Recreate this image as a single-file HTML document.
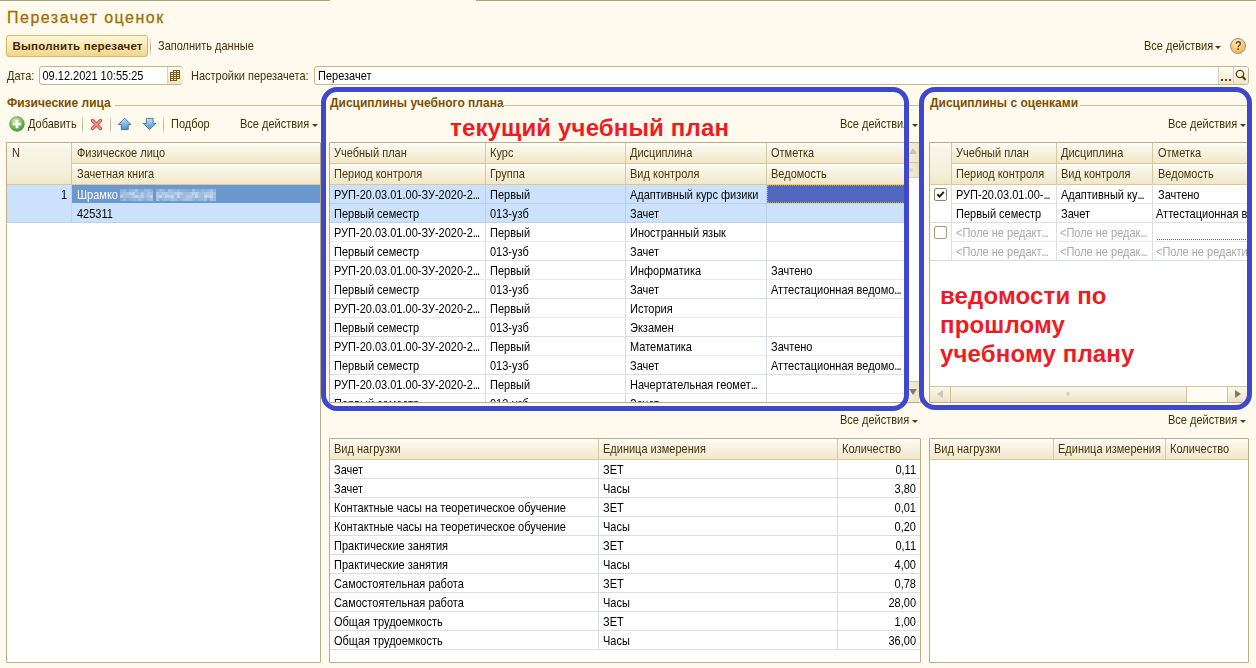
<!DOCTYPE html>
<html><head><meta charset="utf-8"><title>Перезачет оценок</title>
<style>
html,body{margin:0;padding:0;}
body{width:1256px;height:668px;overflow:hidden;position:relative;background:#FEFAEE;font-family:"Liberation Sans",sans-serif;}
div{position:absolute;}
.t{white-space:pre;}
</style></head><body>
<div style="left:0px;top:0px;width:330px;height:1px;background:#AAA478"></div>
<div style="left:476px;top:0px;width:780px;height:1px;background:#AAA478"></div>
<div style="left:0px;top:1px;width:330px;height:1px;background:#FFFFF6"></div>
<div style="left:476px;top:1px;width:780px;height:1px;background:#FFFFF6"></div>
<div class="t" style="left:7px;top:8.46px;font-size:16px;line-height:20px;color:#A06F00;letter-spacing:1.5px;-webkit-text-stroke:0.3px #A06F00;">Перезачет оценок</div>
<div style="left:6px;top:35px;width:140px;height:20px;border:1px solid #D9B867;border-radius:3px;background:linear-gradient(#FFF5D9,#F8E4AA 60%,#F0D48C);"></div>
<div class="t" style="left:12.5px;top:39.27px;font-size:11.5px;line-height:15.5px;color:#3E2A00;font-weight:bold;letter-spacing:0.22px;">Выполнить перезачет</div>
<div style="left:150px;top:37px;width:1px;height:20px;background:linear-gradient(rgba(190,180,140,0),#BDB38C 40%,#BDB38C 60%,rgba(190,180,140,0))"></div>
<div class="t" style="left:158px;top:38.69px;font-size:11px;line-height:15px;color:#403008;transform:scaleY(1.12);transform-origin:0 11.31px;">Заполнить данные</div>
<div class="t" style="left:1144px;top:38.69px;font-size:11px;line-height:15px;color:#403008;transform:scaleY(1.12);transform-origin:0 11.31px;">Все действия</div>
<div style="left:1215px;top:46px;width:0;height:0;border-left:3px solid transparent;border-right:3px solid transparent;border-top:3px solid #4D3B0D;"></div>
<div style="left:1230px;top:38px;width:14px;height:14px;border-radius:50%;border:1px solid #9A9488;background:radial-gradient(circle at 45% 30%,#FFF0D0 0,#FBCB80 45%,#F2A436 100%);"></div>
<div class="t" style="left:1235px;top:38.69px;font-size:11px;line-height:15px;color:#6E4420;font-weight:bold;transform:scaleY(1.12);transform-origin:0 11.31px;">?</div>
<div class="t" style="left:7px;top:68.69px;font-size:11px;line-height:15px;color:#403008;transform:scaleY(1.12);transform-origin:0 11.31px;">Дата:</div>
<div style="left:39px;top:66px;width:142px;height:17px;border:1px solid #C2B88E;border-radius:3px;background:#fff;"></div>
<div class="t" style="left:42.5px;top:68.69px;font-size:11px;line-height:15px;color:#000;transform:scaleY(1.12);transform-origin:0 11.31px;">09.12.2021 10:55:25</div>
<div style="left:167px;top:67px;width:15px;height:17px;border-left:1px solid #D8D0B0;border-radius:0 2px 2px 0;background:linear-gradient(#FFFDF6,#F7F1DE 60%,#EDE5C8);"></div>
<svg style="position:absolute;left:170px;top:70px" width="10" height="11" viewBox="0 0 10 11" shape-rendering="crispEdges"><rect x="3" y="0" width="7" height="9" fill="#7A5A0E"/><rect x="0" y="2" width="7" height="9" fill="#7A5A0E"/><rect x="4" y="1" width="2" height="1" fill="#F6EFD8"/><rect x="7" y="1" width="2" height="1" fill="#F6EFD8"/><rect x="1" y="3" width="2" height="1" fill="#F6EFD8"/><rect x="4" y="3" width="2" height="1" fill="#F6EFD8"/><rect x="7" y="3" width="2" height="1" fill="#F6EFD8"/><rect x="1" y="5" width="2" height="1" fill="#F6EFD8"/><rect x="4" y="5" width="2" height="1" fill="#F6EFD8"/><rect x="7" y="5" width="2" height="1" fill="#F6EFD8"/><rect x="1" y="7" width="2" height="1" fill="#F6EFD8"/><rect x="4" y="7" width="2" height="1" fill="#F6EFD8"/><rect x="7" y="7" width="2" height="1" fill="#F6EFD8"/><rect x="1" y="9" width="2" height="1" fill="#F6EFD8"/><rect x="4" y="9" width="2" height="1" fill="#F6EFD8"/></svg>
<div class="t" style="left:191px;top:68.69px;font-size:11px;line-height:15px;color:#403008;transform:scaleY(1.12);transform-origin:0 11.31px;">Настройки перезачета:</div>
<div style="left:314px;top:66px;width:933px;height:17px;border:1px solid #C2B88E;border-radius:3px;background:#fff;"></div>
<div class="t" style="left:318px;top:68.69px;font-size:11px;line-height:15px;color:#000;transform:scaleY(1.12);transform-origin:0 11.31px;">Перезачет</div>
<div style="left:1218px;top:67px;width:14px;height:17px;border-left:1px solid #D8D0B0;background:linear-gradient(#FFFDF6,#F7F1DE 60%,#EDE5C8);"></div>
<div style="left:1233px;top:67px;width:14px;height:17px;border-left:1px solid #D8D0B0;border-radius:0 2px 2px 0;background:linear-gradient(#FFFDF6,#F7F1DE 60%,#EDE5C8);"></div>
<svg style="position:absolute;left:1221px;top:79px" width="12" height="2" shape-rendering="crispEdges"><rect x="0" y="0" width="2" height="2" fill="#5A4208"/><rect x="4" y="0" width="2" height="2" fill="#5A4208"/><rect x="8" y="0" width="2" height="2" fill="#5A4208"/></svg>
<svg style="position:absolute;left:1234px;top:68px" width="13" height="14" viewBox="0 0 13 14"><circle cx="6" cy="6" r="3.7" fill="none" stroke="#5A4208" stroke-width="1.3"/><path d="M8.6 8.8 L11 11.3" stroke="#5A4208" stroke-width="2.2" stroke-linecap="round"/></svg>
<div class="t" style="left:7px;top:94.84px;font-size:12px;line-height:16px;color:#7E5000;font-weight:bold;">Физические лица</div>
<div style="left:115px;top:105px;width:206px;height:1px;background:#C9BF94"></div>
<div class="t" style="left:330px;top:94.84px;font-size:12px;line-height:16px;color:#7E5000;font-weight:bold;">Дисциплины учебного плана</div>
<div style="left:502px;top:105px;width:418px;height:1px;background:#C9BF94"></div>
<div class="t" style="left:930px;top:94.84px;font-size:12px;line-height:16px;color:#7E5000;font-weight:bold;">Дисциплины с оценками</div>
<div style="left:1080px;top:105px;width:169px;height:1px;background:#C9BF94"></div>
<svg style="position:absolute;left:9px;top:116px" width="16" height="16" viewBox="0 0 16 16"><defs><radialGradient id="g1" cx="0.4" cy="0.3" r="0.8"><stop offset="0" stop-color="#CFEFB8"/><stop offset="0.6" stop-color="#6DBA4A"/><stop offset="1" stop-color="#3E8A2A"/></radialGradient></defs><circle cx="8" cy="8" r="7.3" fill="url(#g1)" stroke="#6A8A6A" stroke-width="0.8"/><path d="M8 3.8V12.2M3.8 8H12.2" stroke="#fff" stroke-width="2.6"/></svg>
<div class="t" style="left:28px;top:116.69px;font-size:11px;line-height:15px;color:#403008;transform:scaleY(1.12);transform-origin:0 11.31px;">Добавить</div>
<div style="left:82px;top:115px;width:1px;height:20px;background:linear-gradient(rgba(190,180,140,0),#BDB38C 40%,#BDB38C 60%,rgba(190,180,140,0))"></div>
<svg style="position:absolute;left:89px;top:117px" width="15" height="15" viewBox="89 117 15 15"><path d="M92.5 120.5L100.5 128.5M100.5 120.5L92.5 128.5" stroke="#D84A44" stroke-width="3.4" stroke-linecap="round"/><path d="M92.5 120.5L100.5 128.5M100.5 120.5L92.5 128.5" stroke="#F6A898" stroke-width="1.2" stroke-linecap="round"/></svg>
<div style="left:110px;top:115px;width:1px;height:20px;background:linear-gradient(rgba(190,180,140,0),#BDB38C 40%,#BDB38C 60%,rgba(190,180,140,0))"></div>
<svg style="position:absolute;left:116px;top:116px" width="18" height="16" viewBox="116 116 18 16"><defs><linearGradient id="ga" x1="0" y1="0" x2="0" y2="1"><stop offset="0" stop-color="#C4E4FA"/><stop offset="1" stop-color="#4A90D0"/></linearGradient></defs><path d="M124.6 118.2L131 124.6H128.2V129.6H121.3V124.6H118.3Z" fill="url(#ga)" stroke="#3E6E98" stroke-width="0.9" stroke-linejoin="round"/></svg>
<svg style="position:absolute;left:141px;top:116px" width="18" height="16" viewBox="141 116 18 16"><defs><linearGradient id="gb" x1="0" y1="0" x2="0" y2="1"><stop offset="0" stop-color="#C4E4FA"/><stop offset="1" stop-color="#4A90D0"/></linearGradient></defs><path d="M149.5 129.6L155.9 123.4H153.1V118.4H146.3V123.4H143.2Z" fill="url(#gb)" stroke="#3E6E98" stroke-width="0.9" stroke-linejoin="round"/></svg>
<div style="left:163px;top:115px;width:1px;height:20px;background:linear-gradient(rgba(190,180,140,0),#BDB38C 40%,#BDB38C 60%,rgba(190,180,140,0))"></div>
<div class="t" style="left:171px;top:116.69px;font-size:11px;line-height:15px;color:#403008;transform:scaleY(1.12);transform-origin:0 11.31px;">Подбор</div>
<div class="t" style="left:240px;top:116.69px;font-size:11px;line-height:15px;color:#403008;transform:scaleY(1.12);transform-origin:0 11.31px;">Все действия</div>
<div style="left:312px;top:124px;width:0;height:0;border-left:3px solid transparent;border-right:3px solid transparent;border-top:3px solid #4D3B0D;"></div>
<div class="t" style="left:840px;top:116.69px;font-size:11px;line-height:15px;color:#403008;transform:scaleY(1.12);transform-origin:0 11.31px;">Все действия</div>
<div style="left:912px;top:124px;width:0;height:0;border-left:3px solid transparent;border-right:3px solid transparent;border-top:3px solid #4D3B0D;"></div>
<div class="t" style="left:1168px;top:116.69px;font-size:11px;line-height:15px;color:#403008;transform:scaleY(1.12);transform-origin:0 11.31px;">Все действия</div>
<div style="left:1240px;top:124px;width:0;height:0;border-left:3px solid transparent;border-right:3px solid transparent;border-top:3px solid #4D3B0D;"></div>
<div class="t" style="left:840px;top:412.69px;font-size:11px;line-height:15px;color:#403008;transform:scaleY(1.12);transform-origin:0 11.31px;">Все действия</div>
<div style="left:912px;top:420px;width:0;height:0;border-left:3px solid transparent;border-right:3px solid transparent;border-top:3px solid #4D3B0D;"></div>
<div class="t" style="left:1168px;top:412.69px;font-size:11px;line-height:15px;color:#403008;transform:scaleY(1.12);transform-origin:0 11.31px;">Все действия</div>
<div style="left:1240px;top:420px;width:0;height:0;border-left:3px solid transparent;border-right:3px solid transparent;border-top:3px solid #4D3B0D;"></div>
<div style="left:6px;top:142px;width:315px;height:521px;box-sizing:border-box;border:1px solid #B5AE88;border-radius:1px;background:#fff;"></div>
<div style="left:7px;top:143px;width:313px;height:41px;background:linear-gradient(#FFFDF8 0px,#F8F5E8 5px,#F5F0DC 30px,#F3E6C4 41px);"></div>
<div style="left:71px;top:143px;width:1px;height:41px;background:#D3C9A2"></div>
<div style="left:72px;top:163px;width:248px;height:1px;background:#D3C9A2"></div>
<div style="left:72px;top:164px;width:248px;height:20px;background:linear-gradient(#FFFDF8 0px,#F8F5E8 5px,#F5F0DC 12px,#F3E6C4 20px);"></div>
<div style="left:72px;top:143px;width:248px;height:20px;background:linear-gradient(#FFFDF8 0px,#F8F5E8 5px,#F5F0DC 12px,#F3E6C4 20px);"></div>
<div style="left:7px;top:184px;width:313px;height:1px;background:#D3C9A2"></div>
<div class="t" style="left:12px;top:145.69px;font-size:11px;line-height:15px;color:#45350C;transform:scaleY(1.12);transform-origin:0 11.31px;">N</div>
<div class="t" style="left:77px;top:145.69px;font-size:11px;line-height:15px;color:#45350C;transform:scaleY(1.12);transform-origin:0 11.31px;">Физическое лицо</div>
<div class="t" style="left:77px;top:166.69px;font-size:11px;line-height:15px;color:#45350C;transform:scaleY(1.12);transform-origin:0 11.31px;">Зачетная книга</div>
<div style="left:7px;top:185px;width:313px;height:37px;background:#CCE1FC;"></div>
<div style="left:72px;top:185px;width:248px;height:18px;background:#6A98CF;"></div>
<div style="left:71px;top:185px;width:1px;height:37px;background:#C2D2E6"></div>
<div style="left:7px;top:222px;width:313px;height:1px;background:#BCD0E8"></div>
<div class="t" style="left:27px;width:40px;text-align:right;top:187.69px;font-size:11px;line-height:15px;color:#000;transform:scaleY(1.12);transform-origin:0 11.31px;">1</div>
<div class="t" style="left:77px;top:187.69px;font-size:11px;line-height:15px;color:#fff;transform:scaleY(1.12);transform-origin:0 11.31px;">Шрамко</div>
<svg style="position:absolute;left:120px;top:189px;filter:blur(0.5px)" width="96" height="12" shape-rendering="crispEdges"><rect x="0" y="0" width="3" height="3" fill="rgb(140, 175, 218)"/><rect x="0" y="3" width="3" height="3" fill="rgb(156, 186, 223)"/><rect x="0" y="6" width="3" height="3" fill="rgb(183, 205, 232)"/><rect x="0" y="9" width="3" height="3" fill="rgb(135, 172, 216)"/><rect x="3" y="0" width="3" height="3" fill="rgb(149, 181, 221)"/><rect x="3" y="3" width="3" height="3" fill="rgb(165, 193, 226)"/><rect x="3" y="6" width="3" height="3" fill="rgb(158, 188, 224)"/><rect x="3" y="9" width="3" height="3" fill="rgb(153, 185, 222)"/><rect x="6" y="0" width="3" height="3" fill="rgb(127, 167, 214)"/><rect x="6" y="3" width="3" height="3" fill="rgb(168, 195, 227)"/><rect x="6" y="6" width="3" height="3" fill="rgb(158, 188, 224)"/><rect x="6" y="9" width="3" height="3" fill="rgb(136, 172, 216)"/><rect x="9" y="0" width="3" height="3" fill="rgb(144, 178, 219)"/><rect x="9" y="3" width="3" height="3" fill="rgb(185, 206, 233)"/><rect x="9" y="6" width="3" height="3" fill="rgb(161, 190, 225)"/><rect x="9" y="9" width="3" height="3" fill="rgb(141, 176, 218)"/><rect x="12" y="0" width="3" height="3" fill="rgb(153, 184, 222)"/><rect x="12" y="3" width="3" height="3" fill="rgb(190, 210, 234)"/><rect x="12" y="6" width="3" height="3" fill="rgb(180, 203, 231)"/><rect x="12" y="9" width="3" height="3" fill="rgb(149, 181, 221)"/><rect x="15" y="0" width="3" height="3" fill="rgb(168, 194, 227)"/><rect x="15" y="3" width="3" height="3" fill="rgb(152, 183, 222)"/><rect x="15" y="6" width="3" height="3" fill="rgb(192, 211, 235)"/><rect x="15" y="9" width="3" height="3" fill="rgb(144, 178, 219)"/><rect x="18" y="0" width="3" height="3" fill="rgb(132, 170, 215)"/><rect x="18" y="3" width="3" height="3" fill="rgb(155, 185, 223)"/><rect x="18" y="6" width="3" height="3" fill="rgb(169, 195, 227)"/><rect x="18" y="9" width="3" height="3" fill="rgb(167, 194, 227)"/><rect x="21" y="0" width="3" height="3" fill="rgb(133, 171, 216)"/><rect x="21" y="3" width="3" height="3" fill="rgb(174, 199, 229)"/><rect x="21" y="6" width="3" height="3" fill="rgb(183, 205, 232)"/><rect x="21" y="9" width="3" height="3" fill="rgb(148, 181, 220)"/><rect x="24" y="0" width="3" height="3" fill="rgb(149, 182, 221)"/><rect x="24" y="3" width="3" height="3" fill="rgb(152, 184, 222)"/><rect x="24" y="6" width="3" height="3" fill="rgb(158, 188, 224)"/><rect x="24" y="9" width="3" height="3" fill="rgb(141, 176, 218)"/><rect x="27" y="0" width="3" height="3" fill="rgb(155, 186, 223)"/><rect x="27" y="3" width="3" height="3" fill="rgb(168, 194, 227)"/><rect x="27" y="6" width="3" height="3" fill="rgb(169, 195, 227)"/><rect x="27" y="9" width="3" height="3" fill="rgb(157, 187, 223)"/><rect x="30" y="0" width="3" height="3" fill="rgb(145, 179, 219)"/><rect x="30" y="3" width="3" height="3" fill="rgb(162, 191, 225)"/><rect x="30" y="6" width="3" height="3" fill="rgb(190, 209, 234)"/><rect x="30" y="9" width="3" height="3" fill="rgb(162, 190, 225)"/><rect x="36" y="0" width="3" height="3" fill="rgb(136, 173, 217)"/><rect x="36" y="3" width="3" height="3" fill="rgb(174, 199, 229)"/><rect x="36" y="6" width="3" height="3" fill="rgb(178, 201, 230)"/><rect x="36" y="9" width="3" height="3" fill="rgb(169, 195, 227)"/><rect x="39" y="0" width="3" height="3" fill="rgb(157, 187, 223)"/><rect x="39" y="3" width="3" height="3" fill="rgb(162, 190, 225)"/><rect x="39" y="6" width="3" height="3" fill="rgb(197, 215, 237)"/><rect x="39" y="9" width="3" height="3" fill="rgb(137, 173, 217)"/><rect x="42" y="0" width="3" height="3" fill="rgb(144, 178, 219)"/><rect x="42" y="3" width="3" height="3" fill="rgb(182, 204, 232)"/><rect x="42" y="6" width="3" height="3" fill="rgb(162, 190, 225)"/><rect x="42" y="9" width="3" height="3" fill="rgb(153, 184, 222)"/><rect x="45" y="0" width="3" height="3" fill="rgb(127, 167, 214)"/><rect x="45" y="3" width="3" height="3" fill="rgb(178, 202, 230)"/><rect x="45" y="6" width="3" height="3" fill="rgb(188, 209, 234)"/><rect x="45" y="9" width="3" height="3" fill="rgb(156, 186, 223)"/><rect x="48" y="0" width="3" height="3" fill="rgb(163, 191, 225)"/><rect x="48" y="3" width="3" height="3" fill="rgb(163, 191, 225)"/><rect x="48" y="6" width="3" height="3" fill="rgb(185, 206, 233)"/><rect x="48" y="9" width="3" height="3" fill="rgb(157, 187, 223)"/><rect x="51" y="0" width="3" height="3" fill="rgb(151, 183, 221)"/><rect x="51" y="3" width="3" height="3" fill="rgb(169, 195, 227)"/><rect x="51" y="6" width="3" height="3" fill="rgb(191, 211, 235)"/><rect x="51" y="9" width="3" height="3" fill="rgb(172, 197, 228)"/><rect x="54" y="0" width="3" height="3" fill="rgb(146, 179, 220)"/><rect x="54" y="3" width="3" height="3" fill="rgb(178, 201, 230)"/><rect x="54" y="6" width="3" height="3" fill="rgb(158, 188, 224)"/><rect x="54" y="9" width="3" height="3" fill="rgb(162, 190, 225)"/><rect x="57" y="0" width="3" height="3" fill="rgb(153, 185, 222)"/><rect x="57" y="3" width="3" height="3" fill="rgb(192, 211, 235)"/><rect x="57" y="6" width="3" height="3" fill="rgb(191, 210, 234)"/><rect x="57" y="9" width="3" height="3" fill="rgb(144, 178, 219)"/><rect x="60" y="0" width="3" height="3" fill="rgb(142, 177, 219)"/><rect x="60" y="3" width="3" height="3" fill="rgb(178, 202, 230)"/><rect x="60" y="6" width="3" height="3" fill="rgb(156, 187, 223)"/><rect x="60" y="9" width="3" height="3" fill="rgb(151, 183, 222)"/><rect x="63" y="0" width="3" height="3" fill="rgb(133, 170, 215)"/><rect x="63" y="3" width="3" height="3" fill="rgb(155, 185, 223)"/><rect x="63" y="6" width="3" height="3" fill="rgb(158, 188, 224)"/><rect x="63" y="9" width="3" height="3" fill="rgb(165, 192, 226)"/><rect x="66" y="0" width="3" height="3" fill="rgb(131, 169, 215)"/><rect x="66" y="3" width="3" height="3" fill="rgb(160, 189, 224)"/><rect x="66" y="6" width="3" height="3" fill="rgb(172, 197, 228)"/><rect x="66" y="9" width="3" height="3" fill="rgb(169, 195, 227)"/><rect x="69" y="0" width="3" height="3" fill="rgb(129, 168, 214)"/><rect x="69" y="3" width="3" height="3" fill="rgb(169, 195, 227)"/><rect x="69" y="6" width="3" height="3" fill="rgb(179, 202, 231)"/><rect x="69" y="9" width="3" height="3" fill="rgb(170, 196, 227)"/><rect x="72" y="0" width="3" height="3" fill="rgb(161, 190, 225)"/><rect x="72" y="3" width="3" height="3" fill="rgb(187, 207, 233)"/><rect x="72" y="6" width="3" height="3" fill="rgb(167, 194, 227)"/><rect x="72" y="9" width="3" height="3" fill="rgb(149, 182, 221)"/><rect x="75" y="0" width="3" height="3" fill="rgb(141, 176, 218)"/><rect x="75" y="3" width="3" height="3" fill="rgb(187, 208, 233)"/><rect x="75" y="6" width="3" height="3" fill="rgb(197, 214, 236)"/><rect x="75" y="9" width="3" height="3" fill="rgb(138, 174, 217)"/><rect x="78" y="0" width="3" height="3" fill="rgb(133, 171, 216)"/><rect x="78" y="3" width="3" height="3" fill="rgb(159, 189, 224)"/><rect x="78" y="6" width="3" height="3" fill="rgb(165, 193, 226)"/><rect x="78" y="9" width="3" height="3" fill="rgb(152, 184, 222)"/><rect x="81" y="0" width="3" height="3" fill="rgb(151, 183, 221)"/><rect x="81" y="3" width="3" height="3" fill="rgb(161, 190, 225)"/><rect x="81" y="6" width="3" height="3" fill="rgb(156, 186, 223)"/><rect x="81" y="9" width="3" height="3" fill="rgb(150, 182, 221)"/><rect x="84" y="0" width="3" height="3" fill="rgb(142, 176, 218)"/><rect x="84" y="3" width="3" height="3" fill="rgb(174, 199, 229)"/><rect x="84" y="6" width="3" height="3" fill="rgb(196, 214, 236)"/><rect x="84" y="9" width="3" height="3" fill="rgb(161, 190, 225)"/><rect x="87" y="0" width="3" height="3" fill="rgb(148, 181, 220)"/><rect x="87" y="3" width="3" height="3" fill="rgb(176, 200, 230)"/><rect x="87" y="6" width="3" height="3" fill="rgb(184, 206, 232)"/><rect x="87" y="9" width="3" height="3" fill="rgb(134, 171, 216)"/><rect x="90" y="0" width="3" height="3" fill="rgb(164, 192, 226)"/><rect x="90" y="3" width="3" height="3" fill="rgb(183, 205, 232)"/><rect x="90" y="6" width="3" height="3" fill="rgb(193, 212, 235)"/><rect x="90" y="9" width="3" height="3" fill="rgb(166, 193, 226)"/><rect x="93" y="0" width="3" height="3" fill="rgb(143, 177, 219)"/><rect x="93" y="3" width="3" height="3" fill="rgb(167, 194, 227)"/><rect x="93" y="6" width="3" height="3" fill="rgb(160, 189, 224)"/><rect x="93" y="9" width="3" height="3" fill="rgb(159, 188, 224)"/></svg>
<div class="t" style="left:77px;top:206.69px;font-size:11px;line-height:15px;color:#000;transform:scaleY(1.12);transform-origin:0 11.31px;">425311</div>
<div style="left:329px;top:142px;width:592px;height:261px;box-sizing:border-box;border:1px solid #B5AE88;border-radius:1px;background:#fff;"></div>
<div style="left:330px;top:143px;width:575px;height:20px;background:linear-gradient(#FFFDF8 0px,#F8F5E8 5px,#F5F0DC 12px,#F3E6C4 20px);"></div>
<div style="left:330px;top:164px;width:575px;height:20px;background:linear-gradient(#FFFDF8 0px,#F8F5E8 5px,#F5F0DC 12px,#F3E6C4 20px);"></div>
<div style="left:330px;top:163px;width:575px;height:1px;background:#D3C9A2"></div>
<div style="left:330px;top:184px;width:575px;height:1px;background:#D3C9A2"></div>
<div style="left:485px;top:143px;width:1px;height:41px;background:#D3C9A2"></div>
<div style="left:625px;top:143px;width:1px;height:41px;background:#D3C9A2"></div>
<div style="left:766px;top:143px;width:1px;height:41px;background:#D3C9A2"></div>
<div class="t" style="left:334px;top:145.69px;font-size:11px;line-height:15px;color:#45350C;transform:scaleY(1.12);transform-origin:0 11.31px;">Учебный план</div>
<div class="t" style="left:490px;top:145.69px;font-size:11px;line-height:15px;color:#45350C;transform:scaleY(1.12);transform-origin:0 11.31px;">Курс</div>
<div class="t" style="left:630px;top:145.69px;font-size:11px;line-height:15px;color:#45350C;transform:scaleY(1.12);transform-origin:0 11.31px;">Дисциплина</div>
<div class="t" style="left:771px;top:145.69px;font-size:11px;line-height:15px;color:#45350C;transform:scaleY(1.12);transform-origin:0 11.31px;">Отметка</div>
<div class="t" style="left:334px;top:166.69px;font-size:11px;line-height:15px;color:#45350C;transform:scaleY(1.12);transform-origin:0 11.31px;">Период контроля</div>
<div class="t" style="left:490px;top:166.69px;font-size:11px;line-height:15px;color:#45350C;transform:scaleY(1.12);transform-origin:0 11.31px;">Группа</div>
<div class="t" style="left:630px;top:166.69px;font-size:11px;line-height:15px;color:#45350C;transform:scaleY(1.12);transform-origin:0 11.31px;">Вид контроля</div>
<div class="t" style="left:771px;top:166.69px;font-size:11px;line-height:15px;color:#45350C;transform:scaleY(1.12);transform-origin:0 11.31px;">Ведомость</div>
<div style="left:330px;top:185px;width:575px;height:217px;overflow:hidden;">
<div style="left:0px;top:0px;width:575px;height:37px;background:#CCE1FC;"></div>
<div style="left:155px;top:0px;width:1px;height:217px;background:#D9DEE3"></div>
<div style="left:155px;top:0px;width:1px;height:37px;background:#BCD0E8"></div>
<div style="left:295px;top:0px;width:1px;height:217px;background:#D9DEE3"></div>
<div style="left:295px;top:0px;width:1px;height:37px;background:#BCD0E8"></div>
<div style="left:436px;top:0px;width:1px;height:217px;background:#D9DEE3"></div>
<div style="left:436px;top:0px;width:1px;height:37px;background:#BCD0E8"></div>
<div style="left:437px;top:0px;width:138px;height:18px;background:#5068C0;box-sizing:border-box;border:1px dotted #C0A040;"></div>
<div style="left:0px;top:18px;width:575px;height:1px;background:#BCD0E8"></div>
<div style="left:0px;top:37px;width:575px;height:1px;background:#BCD0E8"></div>
<div class="t" style="left:4px;top:2.69px;font-size:11px;line-height:15px;color:#000;transform:scaleY(1.12);transform-origin:0 11.31px;">РУП-20.03.01.00-ЗУ-2020-2<span style="letter-spacing:-1px">...</span></div>
<div class="t" style="left:160px;top:2.69px;font-size:11px;line-height:15px;color:#000;transform:scaleY(1.12);transform-origin:0 11.31px;">Первый</div>
<div class="t" style="left:300px;top:2.69px;font-size:11px;line-height:15px;color:#000;transform:scaleY(1.12);transform-origin:0 11.31px;">Адаптивный курс физики</div>
<div class="t" style="left:4px;top:21.69px;font-size:11px;line-height:15px;color:#000;transform:scaleY(1.12);transform-origin:0 11.31px;">Первый семестр</div>
<div class="t" style="left:160px;top:21.69px;font-size:11px;line-height:15px;color:#000;transform:scaleY(1.12);transform-origin:0 11.31px;">013-узб</div>
<div class="t" style="left:300px;top:21.69px;font-size:11px;line-height:15px;color:#000;transform:scaleY(1.12);transform-origin:0 11.31px;">Зачет</div>
<div style="left:0px;top:56px;width:575px;height:1px;background:#EEE9E9"></div>
<div style="left:0px;top:75px;width:575px;height:1px;background:#D9DEE3"></div>
<div class="t" style="left:4px;top:40.69px;font-size:11px;line-height:15px;color:#000;transform:scaleY(1.12);transform-origin:0 11.31px;">РУП-20.03.01.00-ЗУ-2020-2<span style="letter-spacing:-1px">...</span></div>
<div class="t" style="left:160px;top:40.69px;font-size:11px;line-height:15px;color:#000;transform:scaleY(1.12);transform-origin:0 11.31px;">Первый</div>
<div class="t" style="left:300px;top:40.69px;font-size:11px;line-height:15px;color:#000;transform:scaleY(1.12);transform-origin:0 11.31px;">Иностранный язык</div>
<div class="t" style="left:4px;top:59.69px;font-size:11px;line-height:15px;color:#000;transform:scaleY(1.12);transform-origin:0 11.31px;">Первый семестр</div>
<div class="t" style="left:160px;top:59.69px;font-size:11px;line-height:15px;color:#000;transform:scaleY(1.12);transform-origin:0 11.31px;">013-узб</div>
<div class="t" style="left:300px;top:59.69px;font-size:11px;line-height:15px;color:#000;transform:scaleY(1.12);transform-origin:0 11.31px;">Зачет</div>
<div style="left:0px;top:94px;width:575px;height:1px;background:#EEE9E9"></div>
<div style="left:0px;top:113px;width:575px;height:1px;background:#D9DEE3"></div>
<div class="t" style="left:4px;top:78.69px;font-size:11px;line-height:15px;color:#000;transform:scaleY(1.12);transform-origin:0 11.31px;">РУП-20.03.01.00-ЗУ-2020-2<span style="letter-spacing:-1px">...</span></div>
<div class="t" style="left:160px;top:78.69px;font-size:11px;line-height:15px;color:#000;transform:scaleY(1.12);transform-origin:0 11.31px;">Первый</div>
<div class="t" style="left:300px;top:78.69px;font-size:11px;line-height:15px;color:#000;transform:scaleY(1.12);transform-origin:0 11.31px;">Информатика</div>
<div class="t" style="left:441px;top:78.69px;font-size:11px;line-height:15px;color:#000;transform:scaleY(1.12);transform-origin:0 11.31px;">Зачтено</div>
<div class="t" style="left:4px;top:97.69px;font-size:11px;line-height:15px;color:#000;transform:scaleY(1.12);transform-origin:0 11.31px;">Первый семестр</div>
<div class="t" style="left:160px;top:97.69px;font-size:11px;line-height:15px;color:#000;transform:scaleY(1.12);transform-origin:0 11.31px;">013-узб</div>
<div class="t" style="left:300px;top:97.69px;font-size:11px;line-height:15px;color:#000;transform:scaleY(1.12);transform-origin:0 11.31px;">Зачет</div>
<div class="t" style="left:441px;top:97.69px;font-size:11px;line-height:15px;color:#000;transform:scaleY(1.12);transform-origin:0 11.31px;">Аттестационная ведомо<span style="letter-spacing:-1px">...</span></div>
<div style="left:0px;top:132px;width:575px;height:1px;background:#EEE9E9"></div>
<div style="left:0px;top:151px;width:575px;height:1px;background:#D9DEE3"></div>
<div class="t" style="left:4px;top:116.69px;font-size:11px;line-height:15px;color:#000;transform:scaleY(1.12);transform-origin:0 11.31px;">РУП-20.03.01.00-ЗУ-2020-2<span style="letter-spacing:-1px">...</span></div>
<div class="t" style="left:160px;top:116.69px;font-size:11px;line-height:15px;color:#000;transform:scaleY(1.12);transform-origin:0 11.31px;">Первый</div>
<div class="t" style="left:300px;top:116.69px;font-size:11px;line-height:15px;color:#000;transform:scaleY(1.12);transform-origin:0 11.31px;">История</div>
<div class="t" style="left:4px;top:135.69px;font-size:11px;line-height:15px;color:#000;transform:scaleY(1.12);transform-origin:0 11.31px;">Первый семестр</div>
<div class="t" style="left:160px;top:135.69px;font-size:11px;line-height:15px;color:#000;transform:scaleY(1.12);transform-origin:0 11.31px;">013-узб</div>
<div class="t" style="left:300px;top:135.69px;font-size:11px;line-height:15px;color:#000;transform:scaleY(1.12);transform-origin:0 11.31px;">Экзамен</div>
<div style="left:0px;top:170px;width:575px;height:1px;background:#EEE9E9"></div>
<div style="left:0px;top:189px;width:575px;height:1px;background:#D9DEE3"></div>
<div class="t" style="left:4px;top:154.69px;font-size:11px;line-height:15px;color:#000;transform:scaleY(1.12);transform-origin:0 11.31px;">РУП-20.03.01.00-ЗУ-2020-2<span style="letter-spacing:-1px">...</span></div>
<div class="t" style="left:160px;top:154.69px;font-size:11px;line-height:15px;color:#000;transform:scaleY(1.12);transform-origin:0 11.31px;">Первый</div>
<div class="t" style="left:300px;top:154.69px;font-size:11px;line-height:15px;color:#000;transform:scaleY(1.12);transform-origin:0 11.31px;">Математика</div>
<div class="t" style="left:441px;top:154.69px;font-size:11px;line-height:15px;color:#000;transform:scaleY(1.12);transform-origin:0 11.31px;">Зачтено</div>
<div class="t" style="left:4px;top:173.69px;font-size:11px;line-height:15px;color:#000;transform:scaleY(1.12);transform-origin:0 11.31px;">Первый семестр</div>
<div class="t" style="left:160px;top:173.69px;font-size:11px;line-height:15px;color:#000;transform:scaleY(1.12);transform-origin:0 11.31px;">013-узб</div>
<div class="t" style="left:300px;top:173.69px;font-size:11px;line-height:15px;color:#000;transform:scaleY(1.12);transform-origin:0 11.31px;">Зачет</div>
<div class="t" style="left:441px;top:173.69px;font-size:11px;line-height:15px;color:#000;transform:scaleY(1.12);transform-origin:0 11.31px;">Аттестационная ведомо<span style="letter-spacing:-1px">...</span></div>
<div style="left:0px;top:208px;width:575px;height:1px;background:#EEE9E9"></div>
<div class="t" style="left:4px;top:192.69px;font-size:11px;line-height:15px;color:#000;transform:scaleY(1.12);transform-origin:0 11.31px;">РУП-20.03.01.00-ЗУ-2020-2<span style="letter-spacing:-1px">...</span></div>
<div class="t" style="left:160px;top:192.69px;font-size:11px;line-height:15px;color:#000;transform:scaleY(1.12);transform-origin:0 11.31px;">Первый</div>
<div class="t" style="left:300px;top:192.69px;font-size:11px;line-height:15px;color:#000;transform:scaleY(1.12);transform-origin:0 11.31px;">Начертательная геомет<span style="letter-spacing:-1px">...</span></div>
<div class="t" style="left:4px;top:211.69px;font-size:11px;line-height:15px;color:#000;transform:scaleY(1.12);transform-origin:0 11.31px;">Первый семестр</div>
<div class="t" style="left:160px;top:211.69px;font-size:11px;line-height:15px;color:#000;transform:scaleY(1.12);transform-origin:0 11.31px;">013-узб</div>
<div class="t" style="left:300px;top:211.69px;font-size:11px;line-height:15px;color:#000;transform:scaleY(1.12);transform-origin:0 11.31px;">Зачет</div>
</div>
<div style="left:905px;top:143px;width:14px;height:259px;background:#fff;border-left:1px solid #E6E0C8;box-sizing:border-box;"></div>
<div style="left:905px;top:143px;width:14px;height:20px;background:linear-gradient(90deg,#F6F0DC,#EDE4C8);border-bottom:1px solid #D3C9A2;box-sizing:border-box;"></div>
<div style="left:905px;top:163px;width:14px;height:15px;background:linear-gradient(90deg,#F6F0DC,#E8DFC0);border-bottom:1px solid #D3C9A2;box-sizing:border-box;"></div>
<div style="left:905px;top:381px;width:14px;height:21px;background:linear-gradient(90deg,#F6F0DC,#EDE4C8);border-top:1px solid #D3C9A2;box-sizing:border-box;"></div>
<div style="left:909px;top:148px;width:0;height:0;border-left:4px solid transparent;border-right:4px solid transparent;border-bottom:6px solid #C8C4B4;"></div>
<div style="left:909px;top:168px;width:4px;height:4px;border-radius:50%;background:#D8D2C0;"></div>
<div style="left:909px;top:389px;width:0;height:0;border-left:4px solid transparent;border-right:4px solid transparent;border-top:6px solid #807C70;"></div>
<div style="left:929px;top:142px;width:320px;height:261px;box-sizing:border-box;border:1px solid #B5AE88;border-radius:1px;background:#fff;"></div>
<div style="left:930px;top:143px;width:318px;height:41px;background:linear-gradient(#FFFDF8 0px,#F8F5E8 5px,#F5F0DC 30px,#F3E6C4 41px);"></div>
<div style="left:952px;top:143px;width:296px;height:20px;background:linear-gradient(#FFFDF8 0px,#F8F5E8 5px,#F5F0DC 12px,#F3E6C4 20px);"></div>
<div style="left:952px;top:164px;width:296px;height:20px;background:linear-gradient(#FFFDF8 0px,#F8F5E8 5px,#F5F0DC 12px,#F3E6C4 20px);"></div>
<div style="left:952px;top:163px;width:296px;height:1px;background:#D3C9A2"></div>
<div style="left:930px;top:184px;width:318px;height:1px;background:#D3C9A2"></div>
<div style="left:951px;top:143px;width:1px;height:118px;background:#D9DEE3"></div>
<div style="left:951px;top:143px;width:1px;height:41px;background:#D3C9A2"></div>
<div style="left:1056px;top:143px;width:1px;height:118px;background:#D9DEE3"></div>
<div style="left:1056px;top:143px;width:1px;height:41px;background:#D3C9A2"></div>
<div style="left:1152px;top:143px;width:1px;height:118px;background:#D9DEE3"></div>
<div style="left:1152px;top:143px;width:1px;height:41px;background:#D3C9A2"></div>
<div class="t" style="left:956px;top:145.69px;font-size:11px;line-height:15px;color:#45350C;transform:scaleY(1.12);transform-origin:0 11.31px;">Учебный план</div>
<div class="t" style="left:1061px;top:145.69px;font-size:11px;line-height:15px;color:#45350C;transform:scaleY(1.12);transform-origin:0 11.31px;">Дисциплина</div>
<div class="t" style="left:1158px;top:145.69px;font-size:11px;line-height:15px;color:#45350C;transform:scaleY(1.12);transform-origin:0 11.31px;">Отметка</div>
<div class="t" style="left:956px;top:166.69px;font-size:11px;line-height:15px;color:#45350C;transform:scaleY(1.12);transform-origin:0 11.31px;">Период контроля</div>
<div class="t" style="left:1061px;top:166.69px;font-size:11px;line-height:15px;color:#45350C;transform:scaleY(1.12);transform-origin:0 11.31px;">Вид контроля</div>
<div class="t" style="left:1158px;top:166.69px;font-size:11px;line-height:15px;color:#45350C;transform:scaleY(1.12);transform-origin:0 11.31px;">Ведомость</div>
<div style="left:952px;top:203px;width:296px;height:1px;background:#EDE6E6"></div>
<div style="left:930px;top:222px;width:318px;height:1px;background:#D9DEE3"></div>
<div style="left:952px;top:241px;width:296px;height:1px;background:#EDE6E6"></div>
<div style="left:930px;top:260px;width:318px;height:1px;background:#D9DEE3"></div>
<div class="t" style="left:956px;top:187.69px;font-size:11px;line-height:15px;color:#000;transform:scaleY(1.12);transform-origin:0 11.31px;">РУП-20.03.01.00-<span style="letter-spacing:-1px">...</span></div>
<div class="t" style="left:1061px;top:187.69px;font-size:11px;line-height:15px;color:#000;transform:scaleY(1.12);transform-origin:0 11.31px;">Адаптивный ку<span style="letter-spacing:-1px">...</span></div>
<div class="t" style="left:1158px;top:187.69px;font-size:11px;line-height:15px;color:#000;transform:scaleY(1.12);transform-origin:0 11.31px;">Зачтено</div>
<div class="t" style="left:956px;top:206.69px;font-size:11px;line-height:15px;color:#000;transform:scaleY(1.12);transform-origin:0 11.31px;">Первый семестр</div>
<div class="t" style="left:1061px;top:206.69px;font-size:11px;line-height:15px;color:#000;transform:scaleY(1.12);transform-origin:0 11.31px;">Зачет</div>
<div class="t" style="left:1156px;width:91px;overflow:hidden;top:206.69px;font-size:11px;line-height:15px;color:#000;transform:scaleY(1.12);transform-origin:0 11.31px;">Аттестационная ведомость</div>
<div style="left:934px;top:188px;width:11px;height:11px;border:1px solid #8C8468;border-radius:2px;background:#fff;"></div>
<svg style="position:absolute;left:935px;top:189px" width="11" height="11" viewBox="0 0 11 11"><path d="M2.3 5.2L4.6 7.6L8.8 2.8" fill="none" stroke="#222" stroke-width="2"/></svg>
<div style="left:934px;top:226px;width:11px;height:11px;border:1px solid #A89C78;border-radius:2px;background:#fff;"></div>
<div class="t" style="left:956px;top:225.69px;font-size:11px;line-height:15px;color:#A8A8A8;transform:scaleY(1.12);transform-origin:0 11.31px;">&lt;Поле не редакт<span style="letter-spacing:-1px">...</span></div>
<div class="t" style="left:1060px;top:225.69px;font-size:11px;line-height:15px;color:#A8A8A8;transform:scaleY(1.12);transform-origin:0 11.31px;">&lt;Поле не редак<span style="letter-spacing:-1px">...</span></div>
<div class="t" style="left:956px;top:244.69px;font-size:11px;line-height:15px;color:#A8A8A8;transform:scaleY(1.12);transform-origin:0 11.31px;">&lt;Поле не редакт<span style="letter-spacing:-1px">...</span></div>
<div class="t" style="left:1060px;top:244.69px;font-size:11px;line-height:15px;color:#A8A8A8;transform:scaleY(1.12);transform-origin:0 11.31px;">&lt;Поле не редак<span style="letter-spacing:-1px">...</span></div>
<div class="t" style="left:1156px;width:91px;overflow:hidden;top:244.69px;font-size:11px;line-height:15px;color:#A8A8A8;transform:scaleY(1.12);transform-origin:0 11.31px;">&lt;Поле не редактир</div>
<div style="left:1157px;top:239px;width:91px;height:0;border-top:1px dotted #E03030;"></div>
<div style="left:930px;top:386px;width:318px;height:16px;background:linear-gradient(#FBF7EA,#F3ECD6 60%,#EAE0C2);border-top:1px solid #CFC5A0;box-sizing:border-box;"></div>
<div style="left:930px;top:386px;width:21px;height:16px;border-right:1px solid #CFC5A0;box-sizing:border-box;"></div>
<div style="left:1186px;top:387px;width:42px;height:15px;background:#FEFCF5;border-left:1px solid #CFC5A0;border-right:1px solid #CFC5A0;box-sizing:border-box;"></div>
<div style="left:1066px;top:392px;width:4px;height:4px;border-radius:50%;background:#D8D2C0;"></div>
<div style="left:937px;top:390px;width:0;height:0;border-top:4px solid transparent;border-bottom:4px solid transparent;border-right:6px solid #CCC8BA;"></div>
<div style="left:1235px;top:390px;width:0;height:0;border-top:4px solid transparent;border-bottom:4px solid transparent;border-left:6px solid #7C7870;"></div>
<div style="left:329px;top:438px;width:592px;height:225px;box-sizing:border-box;border:1px solid #B5AE88;border-radius:1px;background:#fff;"></div>
<div style="left:330px;top:439px;width:590px;height:20px;background:linear-gradient(#FFFDF8 0px,#F8F5E8 5px,#F5F0DC 12px,#F3E6C4 20px);"></div>
<div style="left:330px;top:459px;width:590px;height:1px;background:#D3C9A2"></div>
<div style="left:598px;top:439px;width:1px;height:210px;background:#D9DEE3"></div>
<div style="left:598px;top:439px;width:1px;height:20px;background:#D3C9A2"></div>
<div style="left:837px;top:439px;width:1px;height:210px;background:#D9DEE3"></div>
<div style="left:837px;top:439px;width:1px;height:20px;background:#D3C9A2"></div>
<div class="t" style="left:334px;top:441.69px;font-size:11px;line-height:15px;color:#45350C;transform:scaleY(1.12);transform-origin:0 11.31px;">Вид нагрузки</div>
<div class="t" style="left:603px;top:441.69px;font-size:11px;line-height:15px;color:#45350C;transform:scaleY(1.12);transform-origin:0 11.31px;">Единица измерения</div>
<div class="t" style="left:842px;top:441.69px;font-size:11px;line-height:15px;color:#45350C;transform:scaleY(1.12);transform-origin:0 11.31px;">Количество</div>
<div style="left:330px;top:478px;width:590px;height:1px;background:#D9DEE3"></div>
<div class="t" style="left:334px;top:462.69px;font-size:11px;line-height:15px;color:#000;transform:scaleY(1.12);transform-origin:0 11.31px;">Зачет</div>
<div class="t" style="left:603px;top:462.69px;font-size:11px;line-height:15px;color:#000;transform:scaleY(1.12);transform-origin:0 11.31px;">ЗЕТ</div>
<div class="t" style="left:846px;width:70px;text-align:right;top:462.69px;font-size:11px;line-height:15px;color:#000;transform:scaleY(1.12);transform-origin:0 11.31px;">0,11</div>
<div style="left:330px;top:497px;width:590px;height:1px;background:#D9DEE3"></div>
<div class="t" style="left:334px;top:481.69px;font-size:11px;line-height:15px;color:#000;transform:scaleY(1.12);transform-origin:0 11.31px;">Зачет</div>
<div class="t" style="left:603px;top:481.69px;font-size:11px;line-height:15px;color:#000;transform:scaleY(1.12);transform-origin:0 11.31px;">Часы</div>
<div class="t" style="left:846px;width:70px;text-align:right;top:481.69px;font-size:11px;line-height:15px;color:#000;transform:scaleY(1.12);transform-origin:0 11.31px;">3,80</div>
<div style="left:330px;top:516px;width:590px;height:1px;background:#D9DEE3"></div>
<div class="t" style="left:334px;top:500.69px;font-size:11px;line-height:15px;color:#000;transform:scaleY(1.12);transform-origin:0 11.31px;">Контактные часы на теоретическое обучение</div>
<div class="t" style="left:603px;top:500.69px;font-size:11px;line-height:15px;color:#000;transform:scaleY(1.12);transform-origin:0 11.31px;">ЗЕТ</div>
<div class="t" style="left:846px;width:70px;text-align:right;top:500.69px;font-size:11px;line-height:15px;color:#000;transform:scaleY(1.12);transform-origin:0 11.31px;">0,01</div>
<div style="left:330px;top:535px;width:590px;height:1px;background:#D9DEE3"></div>
<div class="t" style="left:334px;top:519.69px;font-size:11px;line-height:15px;color:#000;transform:scaleY(1.12);transform-origin:0 11.31px;">Контактные часы на теоретическое обучение</div>
<div class="t" style="left:603px;top:519.69px;font-size:11px;line-height:15px;color:#000;transform:scaleY(1.12);transform-origin:0 11.31px;">Часы</div>
<div class="t" style="left:846px;width:70px;text-align:right;top:519.69px;font-size:11px;line-height:15px;color:#000;transform:scaleY(1.12);transform-origin:0 11.31px;">0,20</div>
<div style="left:330px;top:554px;width:590px;height:1px;background:#D9DEE3"></div>
<div class="t" style="left:334px;top:538.69px;font-size:11px;line-height:15px;color:#000;transform:scaleY(1.12);transform-origin:0 11.31px;">Практические занятия</div>
<div class="t" style="left:603px;top:538.69px;font-size:11px;line-height:15px;color:#000;transform:scaleY(1.12);transform-origin:0 11.31px;">ЗЕТ</div>
<div class="t" style="left:846px;width:70px;text-align:right;top:538.69px;font-size:11px;line-height:15px;color:#000;transform:scaleY(1.12);transform-origin:0 11.31px;">0,11</div>
<div style="left:330px;top:573px;width:590px;height:1px;background:#D9DEE3"></div>
<div class="t" style="left:334px;top:557.69px;font-size:11px;line-height:15px;color:#000;transform:scaleY(1.12);transform-origin:0 11.31px;">Практические занятия</div>
<div class="t" style="left:603px;top:557.69px;font-size:11px;line-height:15px;color:#000;transform:scaleY(1.12);transform-origin:0 11.31px;">Часы</div>
<div class="t" style="left:846px;width:70px;text-align:right;top:557.69px;font-size:11px;line-height:15px;color:#000;transform:scaleY(1.12);transform-origin:0 11.31px;">4,00</div>
<div style="left:330px;top:592px;width:590px;height:1px;background:#D9DEE3"></div>
<div class="t" style="left:334px;top:576.69px;font-size:11px;line-height:15px;color:#000;transform:scaleY(1.12);transform-origin:0 11.31px;">Самостоятельная работа</div>
<div class="t" style="left:603px;top:576.69px;font-size:11px;line-height:15px;color:#000;transform:scaleY(1.12);transform-origin:0 11.31px;">ЗЕТ</div>
<div class="t" style="left:846px;width:70px;text-align:right;top:576.69px;font-size:11px;line-height:15px;color:#000;transform:scaleY(1.12);transform-origin:0 11.31px;">0,78</div>
<div style="left:330px;top:611px;width:590px;height:1px;background:#D9DEE3"></div>
<div class="t" style="left:334px;top:595.69px;font-size:11px;line-height:15px;color:#000;transform:scaleY(1.12);transform-origin:0 11.31px;">Самостоятельная работа</div>
<div class="t" style="left:603px;top:595.69px;font-size:11px;line-height:15px;color:#000;transform:scaleY(1.12);transform-origin:0 11.31px;">Часы</div>
<div class="t" style="left:846px;width:70px;text-align:right;top:595.69px;font-size:11px;line-height:15px;color:#000;transform:scaleY(1.12);transform-origin:0 11.31px;">28,00</div>
<div style="left:330px;top:630px;width:590px;height:1px;background:#D9DEE3"></div>
<div class="t" style="left:334px;top:614.69px;font-size:11px;line-height:15px;color:#000;transform:scaleY(1.12);transform-origin:0 11.31px;">Общая трудоемкость</div>
<div class="t" style="left:603px;top:614.69px;font-size:11px;line-height:15px;color:#000;transform:scaleY(1.12);transform-origin:0 11.31px;">ЗЕТ</div>
<div class="t" style="left:846px;width:70px;text-align:right;top:614.69px;font-size:11px;line-height:15px;color:#000;transform:scaleY(1.12);transform-origin:0 11.31px;">1,00</div>
<div style="left:330px;top:649px;width:590px;height:1px;background:#D9DEE3"></div>
<div class="t" style="left:334px;top:633.69px;font-size:11px;line-height:15px;color:#000;transform:scaleY(1.12);transform-origin:0 11.31px;">Общая трудоемкость</div>
<div class="t" style="left:603px;top:633.69px;font-size:11px;line-height:15px;color:#000;transform:scaleY(1.12);transform-origin:0 11.31px;">Часы</div>
<div class="t" style="left:846px;width:70px;text-align:right;top:633.69px;font-size:11px;line-height:15px;color:#000;transform:scaleY(1.12);transform-origin:0 11.31px;">36,00</div>
<div style="left:929px;top:438px;width:320px;height:225px;box-sizing:border-box;border:1px solid #B5AE88;border-radius:1px;background:#fff;"></div>
<div style="left:930px;top:439px;width:318px;height:20px;background:linear-gradient(#FFFDF8 0px,#F8F5E8 5px,#F5F0DC 12px,#F3E6C4 20px);"></div>
<div style="left:930px;top:459px;width:318px;height:1px;background:#D3C9A2"></div>
<div style="left:1053px;top:439px;width:1px;height:20px;background:#D3C9A2"></div>
<div style="left:1165px;top:439px;width:1px;height:20px;background:#D3C9A2"></div>
<div class="t" style="left:934px;top:441.69px;font-size:11px;line-height:15px;color:#45350C;transform:scaleY(1.12);transform-origin:0 11.31px;">Вид нагрузки</div>
<div class="t" style="left:1058px;top:441.69px;font-size:11px;line-height:15px;color:#45350C;transform:scaleY(1.12);transform-origin:0 11.31px;">Единица измерения</div>
<div class="t" style="left:1170px;top:441.69px;font-size:11px;line-height:15px;color:#45350C;transform:scaleY(1.12);transform-origin:0 11.31px;">Количество</div>
<div style="left:321px;top:87px;width:578px;height:314px;border:5px solid #3F48CC;border-radius:16px;"></div>
<div style="left:919px;top:87px;width:323px;height:313px;border:5px solid #3F48CC;border-radius:16px;"></div>
<div class="t" style="left:450px;top:113.68px;font-size:24px;line-height:28px;color:#ED1C24;font-weight:bold;letter-spacing:0.15px;">текущий учебный план</div>
<div class="t" style="left:940px;top:281.68px;font-size:24px;line-height:28px;color:#ED1C24;font-weight:bold;letter-spacing:0.15px;">ведомости по</div>
<div class="t" style="left:940px;top:310.68px;font-size:24px;line-height:28px;color:#ED1C24;font-weight:bold;letter-spacing:0.15px;">прошлому</div>
<div class="t" style="left:940px;top:339.68px;font-size:24px;line-height:28px;color:#ED1C24;font-weight:bold;letter-spacing:0.15px;">учебному плану</div>
</body></html>
